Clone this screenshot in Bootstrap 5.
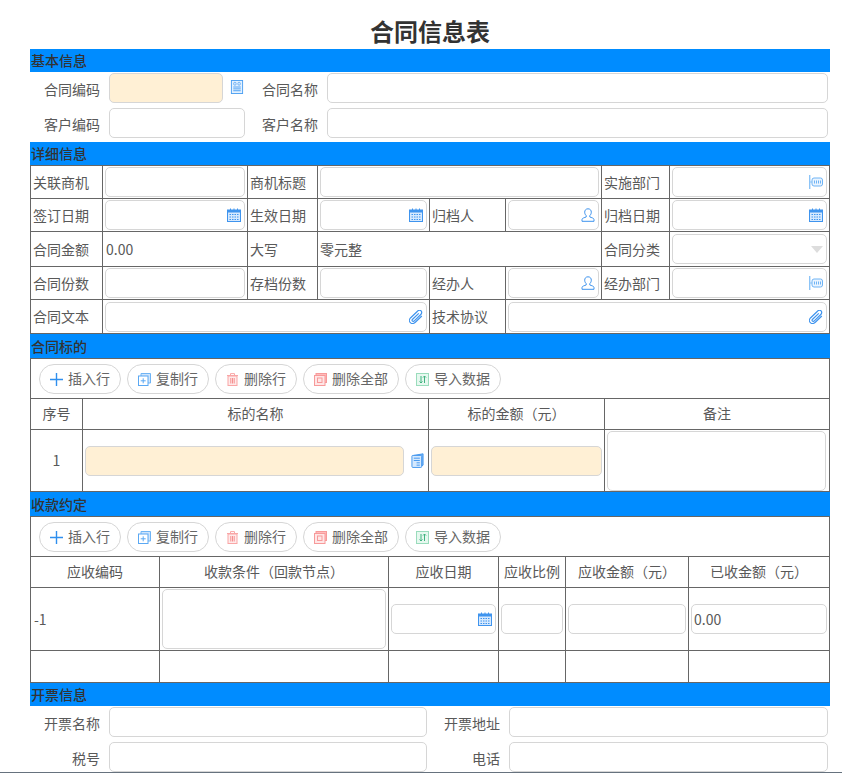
<!DOCTYPE html>
<html lang="zh-CN">
<head>
    <meta charset="UTF-8">
    <meta name="viewport" content="width=device-width, initial-scale=1.0">
    <title>合同信息表</title>

    <link href="https://cdn.jsdelivr.net/npm/bootstrap@5.3.0/dist/css/bootstrap.min.css" rel="stylesheet">
    <style>
        html, body { height: 773px; overflow: hidden; }
        body { font-family: "Noto Sans CJK SC", "Noto Sans", sans-serif; font-size: 14px; color: #595959; background: #fff; }
        .sheet { width: 800px; margin-left: 30px; }
        .sheet-title { height: 49px; margin: 0; padding-top: 13px; font-size: 24px; line-height: 36px; font-weight: 700; color: #333; text-align: center; }
        .section-bar { height: 23px; padding-left: 1px; line-height: 23px; background: #008cff; color: #333; font-weight: 500; }
        .section-bar.tall { height: 24px; line-height: 24px; }

        .form-grid { display: grid; row-gap: 5px; padding: 1px 0 4px; align-items: center; }
        .form-grid.a { grid-template-columns: 79px 136px 82px 501px; }
        .form-grid.b { grid-template-columns: 79px 318px 82px 319px; }
        .form-grid label { padding: 2px 9px 0 0; text-align: right; white-space: nowrap; }

        .form-control, .form-select { height: 30px; min-height: 30px; padding: 0 2px; font-size: 14px; color: #595959; border: 1px solid #d6d6d6; border-radius: 5px; box-shadow: none; }
        .form-select { background-image: none; }
        textarea.form-control { resize: none; }
        .req { background: #fff0d5; }
        .field { position: relative; }
        .field svg { position: absolute; right: 4px; top: 8px; }
        .caret-down { position: absolute; top: 12px; right: 4px; width: 0; height: 0; border-left: 6px solid transparent; border-right: 6px solid transparent; border-top: 7px solid #ddd; }
        .ico { width: 14px; height: 14px; flex: none; display: block; }
        .field-code { width: 114px; }
        .ico-code { margin: 0 0 3px 7px; }
        .ico-item { width: 13px; height: 15px; margin: 0 2px 0 7px; }

        .sheet-table { width: 800px; table-layout: fixed; border-collapse: collapse; margin: 0; }
        .sheet-table td, .sheet-table th { padding: 0 2px; border: 1px solid #666; vertical-align: middle; font-weight: 400; color: #595959; white-space: nowrap; }
        .sheet-table th { padding-bottom: 2px; text-align: center; }
        .sheet-table td.cell-amount { padding-left: 3px; }
        .sheet-table td.cell-code { padding-left: 3px; }
        .sheet-table td.cell-note { padding-right: 3px; }

        .detail-table col:nth-child(1) { width: 72px; }
        .detail-table col:nth-child(2) { width: 145px; }
        .detail-table col:nth-child(3) { width: 70px; }
        .detail-table col:nth-child(4) { width: 112px; }
        .detail-table col:nth-child(5) { width: 76px; }
        .detail-table col:nth-child(6) { width: 96px; }
        .detail-table col:nth-child(7) { width: 68px; }
        .detail-table col:nth-child(8) { width: 160px; }
        .item-table col:nth-child(1) { width: 52px; }
        .item-table col:nth-child(2) { width: 346px; }
        .item-table col:nth-child(3) { width: 176px; }
        .item-table col:nth-child(4) { width: 225px; }
        .pay-table col:nth-child(1) { width: 129px; }
        .pay-table col:nth-child(2) { width: 229px; }
        .pay-table col:nth-child(3) { width: 110px; }
        .pay-table col:nth-child(4) { width: 67px; }
        .pay-table col:nth-child(5) { width: 123px; }
        .pay-table col:nth-child(6) { width: 141px; }

        .r31 { height: 31px; }
        .r32 { height: 32px; }
        .r33 { height: 33px; }
        .r34 { height: 34px; }
        .r35 { height: 35px; }
        .r62 { height: 62px; }
        .r63 { height: 63px; }
        .note { height: 60px; display: block; }

        .toolbar { height: 40px; padding: 5px 8px 0; gap: 6px; border: 1px solid #666; border-bottom: 0; background: #fff; }
        .btn-tool { height: 30px; padding: 0 10px; font-size: 14px; line-height: 1; color: #666; background: #fff; border: 1px solid #d6d6d6; }
        .btn-tool .ico { width: 13px; height: 13px; margin-right: 5px; }
        .btn-tool span { margin-top: -2px; }
        .page-end { border-top: 1px solid #66727e; }
    </style>
</head>
<body>

<!-- Icone riusate -->
<svg width="0" height="0" class="position-absolute">
    <defs>
        <symbol id="i-doc" viewBox="0 0 14 15">
            <rect x="1" y="0.5" width="12" height="14" fill="#e3f1ff" stroke="#4b9ff2"/>
            <rect x="3.5" y="2.5" width="2.5" height="3" rx="1" fill="none" stroke="#4b9ff2" stroke-width=".8"/>
            <rect x="8" y="2.5" width="2.5" height="3" rx="1" fill="none" stroke="#4b9ff2" stroke-width=".8"/>
            <path d="M3 7.5h8M3 9.5h8M3 11.5h8" stroke="#4b9ff2"/>
        </symbol>
        <symbol id="i-docs" viewBox="0 0 14 16">
            <path d="M3 2.5L13 .8V13L11 14" fill="#7db9f5" stroke="#3f94ee"/>
            <rect x="1" y="2.5" width="10.5" height="13" rx="1" fill="#d5e9fe" stroke="#3f94ee"/>
            <path d="M3 5.5h6.5M3 8h6.5M6 10.5h3.5M6 13h3.5" stroke="#3f94ee"/>
        </symbol>
        <symbol id="i-cal" viewBox="0 0 14 14">
            <rect x="0.5" y="2" width="13" height="11.5" fill="#d6e9fe" stroke="#3f94ee"/>
            <rect x="0.5" y="2" width="13" height="2.5" fill="#3f94ee"/>
            <path d="M3.5 0.5v3M7 0.5v3M10.5 0.5v3" stroke="#3f94ee"/>
            <path d="M2.5 6.5h9M2.5 9h9M2.5 11.5h9" stroke="#3f94ee" stroke-dasharray="1.5 1"/>
        </symbol>
        <symbol id="i-user" viewBox="0 0 14 14">
            <path d="M7 .8c2.200 0 3.300 1.500 3.300 3.400 0 1.500-.7 2.700-1.500 3.400v1.400c1.500.6 4.200 1 4.200 2.600v1.700H1v-1.700c0-1.600 2.700-2 4.200-2.600V7.600C4.400 6.900 3.700 5.700 3.700 4.200 3.700 2.300 4.800.8 7 .8z" fill="none" stroke="#3f94ee"/>
        </symbol>
        <symbol id="i-dept" viewBox="0 0 14 14">
            <path d="M.7 0v14" stroke="#8cc4f7" stroke-width="1.4"/>
            <path d="M1 7h2" stroke="#8cc4f7"/>
            <rect x="3" y="3" width="10.5" height="8" rx="2" fill="#eaf4ff" stroke="#6fb4f5"/>
            <path d="M5.500 5.500v3M7.500 5.500v3M9.500 5.500v3M11.500 5.500v3" stroke="#6fb4f5"/>
        </symbol>
        <symbol id="i-clip" viewBox="0 0 14 14">
            <path d="M12.800 6L6.300 12.300c-1.500 1.500-3.800 1.600-5 .4s-1.100-3.500.4-5L8.500 1.200c1.100-1.100 2.700-1.200 3.600-.3s.8 2.500-.3 3.600L5.300 10.900c-.6.600-1.400.7-1.900.2s-.4-1.300.2-1.900L9.800 3.400" fill="none" stroke="#3f94ee" stroke-width="1.2"/>
        </symbol>
        <symbol id="i-plus" viewBox="0 0 13 13">
            <path d="M6.500 0v13M0 6.500h13" stroke="#2f8fee" stroke-width="1.4"/>
        </symbol>
        <symbol id="i-copy" viewBox="0 0 13 13">
            <path d="M3 3V.5h9.500V10H10" fill="#cfe5fc" stroke="#6fb4f5"/>
            <rect x="0.5" y="3" width="9.5" height="9.5" fill="#fff" stroke="#5aa8f3"/>
            <path d="M5.200 5.300v5M2.700 7.800h5" stroke="#5aa8f3"/>
        </symbol>
        <symbol id="i-trash" viewBox="0 0 13 13">
            <path d="M1 2.500h11M4.500 2.500V.6h4v1.900" fill="none" stroke="#f9a6a6"/>
            <rect x="2" y="3" width="9" height="9.500" fill="#ffeaea" stroke="#f9a6a6"/>
            <path d="M4.800 5v5.500M6.500 5v5.500M8.200 5v5.500" stroke="#f58f8f"/>
        </symbol>
        <symbol id="i-trash-all" viewBox="0 0 13 13">
            <rect x="2" y="0.5" width="10.5" height="9" fill="#fbb" stroke="#f79a9a"/>
            <rect x="0.5" y="2.5" width="10.5" height="10" fill="#ffe6e6" stroke="#f79a9a"/>
            <rect x="3.5" y="5" width="4.5" height="4.5" fill="none" stroke="#f79a9a"/>
        </symbol>
        <symbol id="i-import" viewBox="0 0 13 13">
            <rect x="0.5" y="0.5" width="12" height="12" fill="#e6f8ef" stroke="#9adcbc"/>
            <path d="M5 3v7M3.500 8.500L5 10l1.500-1.500" fill="none" stroke="#3fb27f"/>
            <path d="M8.500 10V3M7 4.500L8.500 3 10 4.500" fill="none" stroke="#3fb27f"/>
        </symbol>
    </defs>
</svg>

<div class="sheet">
    <h1 class="sheet-title">合同信息表</h1>

    <!-- 基本信息 -->
    <div class="section-bar">基本信息</div>
    <div class="form-grid a">
        <label>合同编码</label>
        <div class="d-flex align-items-center">
            <input type="text" class="form-control req flex-shrink-0 field-code">
            <svg class="ico ico-code"><use href="#i-doc"/></svg>
        </div>
        <label>合同名称</label>
        <input type="text" class="form-control">
        <label>客户编码</label>
        <input type="text" class="form-control">
        <label>客户名称</label>
        <input type="text" class="form-control">
    </div>

    <!-- 详细信息 -->
    <div class="section-bar">详细信息</div>
    <table class="sheet-table detail-table">
        <colgroup><col><col><col><col><col><col><col><col></colgroup>
        <tr class="r33">
            <td>关联商机</td>
            <td><input type="text" class="form-control"></td>
            <td>商机标题</td>
            <td colspan="3"><input type="text" class="form-control"></td>
            <td>实施部门</td>
            <td><div class="field"><input type="text" class="form-control"><svg class="ico"><use href="#i-dept"/></svg></div></td>
        </tr>
        <tr class="r33">
            <td>签订日期</td>
            <td><div class="field"><input type="text" class="form-control"><svg class="ico"><use href="#i-cal"/></svg></div></td>
            <td>生效日期</td>
            <td><div class="field"><input type="text" class="form-control"><svg class="ico"><use href="#i-cal"/></svg></div></td>
            <td>归档人</td>
            <td><div class="field"><input type="text" class="form-control"><svg class="ico"><use href="#i-user"/></svg></div></td>
            <td>归档日期</td>
            <td><div class="field"><input type="text" class="form-control"><svg class="ico"><use href="#i-cal"/></svg></div></td>
        </tr>
        <tr class="r35">
            <td>合同金额</td>
            <td class="cell-amount">0.00</td>
            <td>大写</td>
            <td colspan="3">零元整</td>
            <td>合同分类</td>
            <td><div class="field"><select class="form-select"></select><span class="caret-down"></span></div></td>
        </tr>
        <tr class="r33">
            <td>合同份数</td>
            <td><input type="text" class="form-control"></td>
            <td>存档份数</td>
            <td><input type="text" class="form-control"></td>
            <td>经办人</td>
            <td><div class="field"><input type="text" class="form-control"><svg class="ico"><use href="#i-user"/></svg></div></td>
            <td>经办部门</td>
            <td><div class="field"><input type="text" class="form-control"><svg class="ico"><use href="#i-dept"/></svg></div></td>
        </tr>
        <tr class="r34">
            <td>合同文本</td>
            <td colspan="3"><div class="field"><input type="text" class="form-control"><svg class="ico"><use href="#i-clip"/></svg></div></td>
            <td>技术协议</td>
            <td colspan="3"><div class="field"><input type="text" class="form-control"><svg class="ico"><use href="#i-clip"/></svg></div></td>
        </tr>
    </table>

    <!-- 合同标的 -->
    <div class="section-bar tall">合同标的</div>
    <div class="toolbar d-flex">
        <button class="btn btn-tool rounded-pill d-inline-flex align-items-center"><svg class="ico"><use href="#i-plus"/></svg><span>插入行</span></button>
        <button class="btn btn-tool rounded-pill d-inline-flex align-items-center"><svg class="ico"><use href="#i-copy"/></svg><span>复制行</span></button>
        <button class="btn btn-tool rounded-pill d-inline-flex align-items-center"><svg class="ico"><use href="#i-trash"/></svg><span>删除行</span></button>
        <button class="btn btn-tool rounded-pill d-inline-flex align-items-center"><svg class="ico"><use href="#i-trash-all"/></svg><span>删除全部</span></button>
        <button class="btn btn-tool rounded-pill d-inline-flex align-items-center"><svg class="ico"><use href="#i-import"/></svg><span>导入数据</span></button>
    </div>
    <table class="sheet-table item-table">
        <colgroup><col><col><col><col></colgroup>
        <tr class="r31">
            <th>序号</th>
            <th>标的名称</th>
            <th>标的金额（元）</th>
            <th>备注</th>
        </tr>
        <tr class="r62">
            <td class="text-center">1</td>
            <td>
                <div class="d-flex align-items-center">
                    <input type="text" class="form-control req">
                    <svg class="ico ico-item"><use href="#i-docs"/></svg>
                </div>
            </td>
            <td><input type="text" class="form-control req"></td>
            <td class="cell-note"><textarea class="form-control note"></textarea></td>
        </tr>
    </table>

    <!-- 收款约定 -->
    <div class="section-bar tall">收款约定</div>
    <div class="toolbar d-flex">
        <button class="btn btn-tool rounded-pill d-inline-flex align-items-center"><svg class="ico"><use href="#i-plus"/></svg><span>插入行</span></button>
        <button class="btn btn-tool rounded-pill d-inline-flex align-items-center"><svg class="ico"><use href="#i-copy"/></svg><span>复制行</span></button>
        <button class="btn btn-tool rounded-pill d-inline-flex align-items-center"><svg class="ico"><use href="#i-trash"/></svg><span>删除行</span></button>
        <button class="btn btn-tool rounded-pill d-inline-flex align-items-center"><svg class="ico"><use href="#i-trash-all"/></svg><span>删除全部</span></button>
        <button class="btn btn-tool rounded-pill d-inline-flex align-items-center"><svg class="ico"><use href="#i-import"/></svg><span>导入数据</span></button>
    </div>
    <table class="sheet-table pay-table">
        <colgroup><col><col><col><col><col><col></colgroup>
        <tr class="r31">
            <th>应收编码</th>
            <th>收款条件（回款节点）</th>
            <th>应收日期</th>
            <th>应收比例</th>
            <th>应收金额（元）</th>
            <th>已收金额（元）</th>
        </tr>
        <tr class="r63">
            <td class="cell-code">-1</td>
            <td><textarea class="form-control note"></textarea></td>
            <td><div class="field"><input type="text" class="form-control"><svg class="ico"><use href="#i-cal"/></svg></div></td>
            <td><input type="text" class="form-control"></td>
            <td><input type="text" class="form-control"></td>
            <td><input type="text" class="form-control" value="0.00"></td>
        </tr>
        <tr class="r32">
            <td></td><td></td><td></td><td></td><td></td><td></td>
        </tr>
    </table>

    <!-- 开票信息 -->
    <div class="section-bar">开票信息</div>
    <div class="form-grid b pb-0">
        <label>开票名称</label>
        <input type="text" class="form-control">
        <label>开票地址</label>
        <input type="text" class="form-control">
        <label>税号</label>
        <input type="text" class="form-control">
        <label>电话</label>
        <input type="text" class="form-control">
    </div>
</div>
<div class="page-end"></div>

<script src="https://cdn.jsdelivr.net/npm/bootstrap@5.3.0/dist/js/bootstrap.bundle.min.js"></script>
</body>
</html>
